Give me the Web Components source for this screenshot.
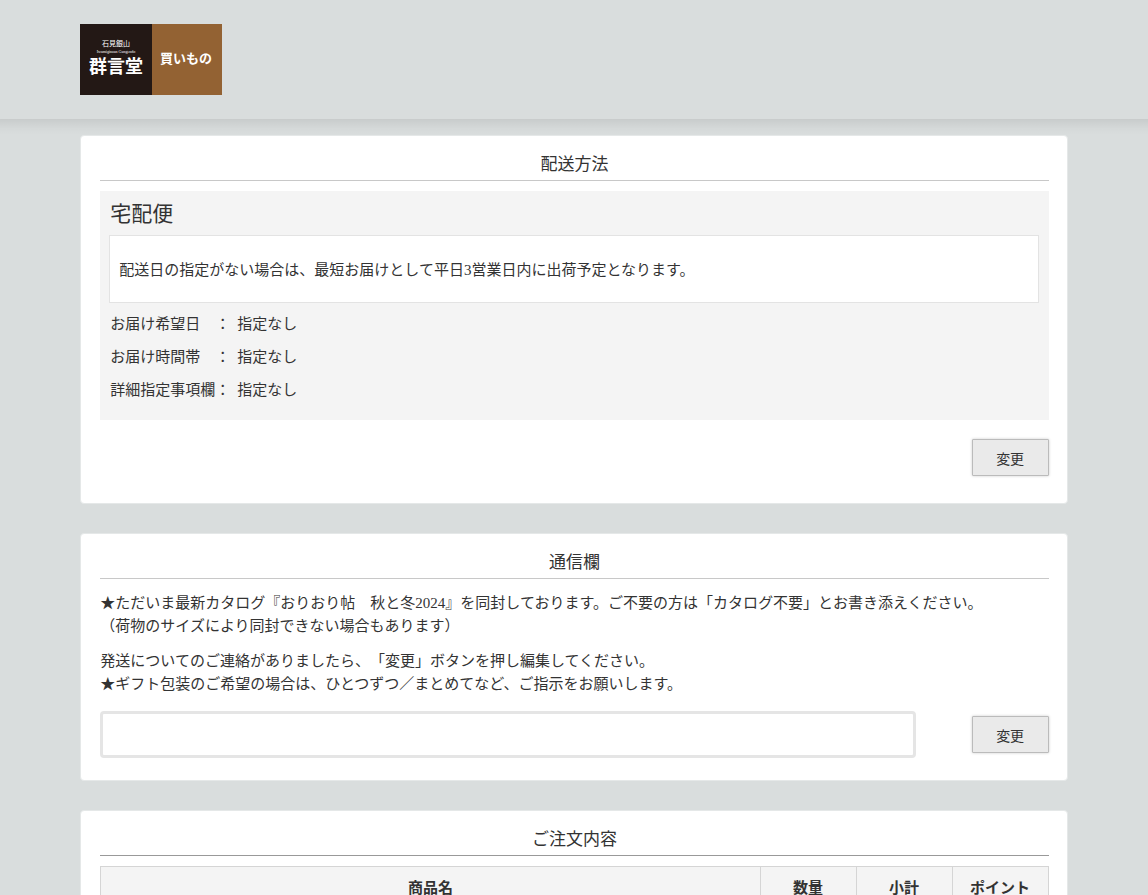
<!DOCTYPE html>
<html lang="ja">
<head>
<meta charset="utf-8">
<meta name="viewport" content="width=device-width, initial-scale=1">
<title>群言堂 買いもの</title>
<style>
  body {
    margin: 0;
    background: #d9dddd;
    color: #333;
    font: 15px/23px "Liberation Serif", "Noto Sans CJK JP", serif;
    text-spacing-trim: space-all;
  }
  p { margin: 0 0 12px; }
  main { width: 86%; margin: 16px auto 0; display: grid; gap: 29px; padding-bottom: 29px; }
</style>
</head>
<body>
<site-header></site-header>
<main>
  <order-card heading="配送方法">
    <delivery-panel name="宅配便">
      <span slot="note">配送日の指定がない場合は、最短お届けとして平日3営業日内に出荷予定となります。</span>
      <delivery-row label="お届け希望日　：">指定なし</delivery-row>
      <delivery-row label="お届け時間帯　：">指定なし</delivery-row>
      <delivery-row label="詳細指定事項欄：">指定なし</delivery-row>
    </delivery-panel>
    <action-bar><change-button>変更</change-button></action-bar>
  </order-card>
  <order-card heading="通信欄">
    <message-field label="通信欄">
      <p slot="text">★ただいま最新カタログ『おりおり帖　秋と冬2024』を同封しております。ご不要の方は「カタログ不要」とお書き添えください。<br>（荷物のサイズにより同封できない場合もあります）</p>
      <p slot="text">発送についてのご連絡がありましたら、「変更」ボタンを押し編集してください。<br>★ギフト包装のご希望の場合は、ひとつずつ／まとめてなど、ご指示をお願いします。</p>
      <change-button>変更</change-button>
    </message-field>
  </order-card>
  <order-card heading="ご注文内容" strong>
    <order-table></order-table>
  </order-card>
</main>
<script>
const define = (name, render) => customElements.define(name, class extends HTMLElement {
  constructor() {
    super();
    this.attachShadow({ mode: 'open' });
  }
  connectedCallback() {
    const template = document.createElement('template');
    template.innerHTML = '<style>*{box-sizing:border-box}</style>' + render(this);
    this.shadowRoot.replaceChildren(template.content.cloneNode(true));
  }
});

define('site-header', () => `
<style>
  :host { display: block; }
  header { padding: 24px 7%; }
  .shade { height: 16px; margin-bottom: -16px; background: linear-gradient(rgba(0,0,0,.08), rgba(0,0,0,.02) 60%, transparent); }
  a { display: block; width: 142px; height: 71px; }
  svg { display: block; }
  text { font-family: "Liberation Serif", "Noto Sans CJK JP", serif; fill: #fff; text-anchor: middle; }
</style>
<header><a href="#" aria-label="群言堂 買いもの">
  <svg width="142" height="71" viewBox="0 0 142 71">
    <rect width="72" height="71" fill="#231815"/>
    <rect x="72" width="70" height="71" fill="#936233"/>
    <text x="36" y="22" font-size="7">石見銀山</text>
    <text x="36" y="29" font-size="4">Iwamiginzan Gungendo</text>
    <text x="36" y="49" font-size="18" font-weight="700">群言堂</text>
    <text x="106" y="39" font-size="13" font-weight="700">買いもの</text>
  </svg>
</a></header>
<div class="shade"></div>`);

define('order-card', el => `
<style>
  :host { display: block; background: #fff; border: 1px solid #e5e8e8; border-radius: 4px; padding: 16px 18px 22px 19px; }
  h2 { margin: 0 0 10px; padding-bottom: 3px; font-size: 17px; line-height: 25px; font-weight: 400; text-align: center; border-bottom: 1px solid #c8c8c8; }
  :host([strong]) h2 { border-color: #999; }
</style>
<h2>${el.getAttribute('heading')}</h2><slot></slot>`);

define('delivery-panel', el => `
<style>
  :host { display: block; background: #f4f4f4; padding: 9px 10px 13px 9px; }
  h3 { margin: 0; font-size: 21px; line-height: 28px; font-weight: 400; padding: 0 1px 7px; }
  .note { background: #fff; border: 1px solid #e3e3e3; padding: 23px 9px 20px; margin-bottom: 5px; }
  dl { margin: 0; padding: 0 1px; }
</style>
<h3>${el.getAttribute('name')}</h3>
<div class="note"><slot name="note"></slot></div>
<dl><slot></slot></dl>`);

define('delivery-row', el => `
<style>
  :host { display: grid; grid-template-columns: 127px 1fr; line-height: 33px; }
  dt, dd { margin: 0; }
</style>
<dt>${el.getAttribute('label')}</dt><dd><slot></slot></dd>`);

define('action-bar', () => `
<style>
  :host { display: flex; justify-content: flex-end; padding: 19px 0 5px; }
</style>
<slot></slot>`);

define('change-button', () => `
<style>
  :host { display: block; }
  button { display: block; width: 77px; height: 37px; padding: 4px 0 0; font: inherit; font-size: 14px; line-height: 20px; color: #333;
    background: #eaeaea; border: 1px solid #bbb; border-radius: 1px; box-shadow: 0 0 3px rgba(0,0,0,.2); }
</style>
<button type="button"><slot></slot></button>`);

define('message-field', el => `
<style>
  :host { display: block; padding-top: 3px; }
  .row { display: flex; align-items: center; justify-content: space-between; padding-top: 3px; }
  input { width: 86%; height: 47px; margin: 0; padding: 0 8px; font: inherit; color: #333; background: #fff; border: 3px solid #e5e5e5; border-radius: 4px; }
</style>
<slot name="text"></slot>
<div class="row"><input type="text" readonly aria-label="${el.getAttribute('label')}"><slot></slot></div>`);

define('order-table', () => `
<style>
  :host { display: block; }
  table { width: 100%; table-layout: fixed; border-collapse: collapse; }
  th { padding: 10px 0; background: #f4f4f4; border: 1px solid #d5d5d5; font-weight: 700; }
  .qty, .sum, .pt { width: 96px; }
</style>
<table><thead><tr>
  <th scope="col">商品名</th>
  <th scope="col" class="qty">数量</th>
  <th scope="col" class="sum">小計</th>
  <th scope="col" class="pt">ポイント</th>
</tr></thead></table>`);
</script>
</body>
</html>
